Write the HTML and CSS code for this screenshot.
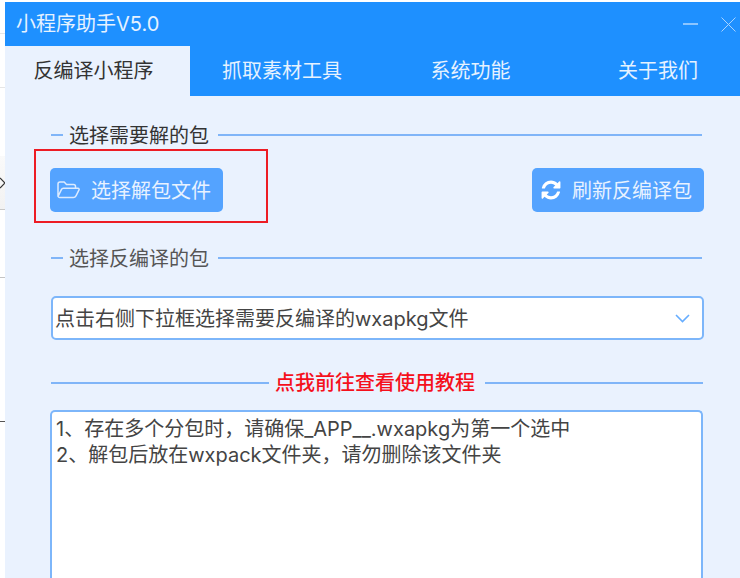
FILE: index.html
```html
<!DOCTYPE html>
<html lang="zh-CN">
<head>
<meta charset="utf-8">
<title>小程序助手V5.0</title>
<link rel="stylesheet" href="styles.css">
</head>
<body>
<div class="desktop">
  <div class="behind">
    <div class="b-row b-33"></div>
    <div class="b-row b-87"></div>
    <div class="b-row b-155"></div>
    <div class="b-row b-209"><svg class="b-chev" viewBox="0 0 5 12" width="5" height="12"><path d="M0 1l5 5-5 5" fill="none" stroke="#333" stroke-width="1.2"/></svg></div>
    <div class="b-row b-277"></div>
    <div class="b-row b-421"></div>
  </div>
  <div class="app">
    <header class="titlebar">
      <span class="app-title">小程序助手V5.0</span>
      <div class="win-controls">
        <svg width="15" height="2" viewBox="0 0 15 2"><path d="M0 1h15" stroke="#a9d3ff" stroke-width="1.6"/></svg>
        <svg width="15" height="15" viewBox="0 0 15 15"><path d="M.5.5l14 14M14.500.5l-14 14" fill="none" stroke="#a9d3ff" stroke-width="1"/></svg>
      </div>
    </header>
    <nav class="tabs">
      <div class="tab active">反编译小程序</div>
      <div class="tab t2">抓取素材工具</div>
      <div class="tab t3">系统功能</div>
      <div class="tab t4">关于我们</div>
    </nav>
    <main class="panel">
      <div class="legend first"><i class="dash"></i><span class="legend-text">选择需要解的包</span><i class="rule"></i></div>
      <div class="actions">
        <button class="btn btn-l" type="button">
          <svg class="ico-folder" width="23" height="18" viewBox="0 0 23 18"><path d="M1 15V3a2 2 0 0 1 2-2h4.200l2.300 2.500h7a2 2 0 0 1 2 2V7M1 15.500 4.500 8.300a2 2 0 0 1 1.800-1.100h14.700c.9 0 1.400.9 1 1.700l-3 6a3 3 0 0 1-2.700 1.600H3a2 2 0 0 1-2-1z" fill="none" stroke="#dcebff" stroke-width="1.500" stroke-linejoin="round"/></svg>
          <span class="btn-label">选择解包文件</span>
        </button>
        <button class="btn btn-r" type="button">
          <svg class="ico-refresh" width="22" height="22" viewBox="0 0 1792 1792"><path fill="#fff" d="M1639 1056q0 5-1 7-64 268-268 434.500t-478 166.500q-146 0-282.500-55t-243.500-157l-129 129q-19 19-45 19t-45-19-19-45v-448q0-26 19-45t45-19h448q26 0 45 19t19 45-19 45l-137 137q71 66 161 102t187 36q134 0 250-65t186-179q11-17 53-117 8-23 30-23h192q13 0 22.500 9.500t9.500 22.500zm25-800v448q0 26-19 45t-45 19h-448q-26 0-45-19t-19-45 19-45l138-138q-148-137-349-137-134 0-250 65t-186 179q-11 17-53 117-8 23-30 23h-199q-13 0-22.500-9.500t-9.500-22.500v-7q65-268 270-434.500t480-166.500q146 0 284 55.500t245 156.500l130-129q19-19 45-19t45 19 19 45z"/></svg>
          <span class="btn-label">刷新反编译包</span>
        </button>
      </div>
      <div class="legend second"><i class="dash"></i><span class="legend-text muted">选择反编译的包</span><i class="rule"></i></div>
      <div class="select">
        <span class="select-value">点击右侧下拉框选择需要反编译的wxapkg文件</span>
        <svg width="15" height="9" viewBox="0 0 15 9"><path d="M1 1l6.500 6.500L14 1" fill="none" stroke="#66adff" stroke-width="1.600"/></svg>
      </div>
      <div class="link-row"><i class="rule"></i><a class="link">点我前往查看使用教程</a><i class="rule"></i></div>
      <div class="notes">
        <p>1、存在多个分包时，请确保_APP__.wxapkg为第一个选中</p>
        <p>2、解包后放在wxpack文件夹，请勿删除该文件夹</p>
      </div>
    </main>
  </div>
  <div class="annotation"></div>
</div>
</body>
</html>
```
FILE: styles.css
```css
* { box-sizing: border-box; }
html, body { margin: 0; height: 578px; overflow: hidden; background: #fff; }
body { font-family: Inter, "Noto Sans CJK SC", sans-serif; font-size: 20px; color: #444; }

.desktop { position: relative; display: flex; width: 740px; height: 578px; overflow: hidden; }

.behind { width: 5px; flex: none; display: flex; flex-direction: column; }
.b-row { flex: none; border-bottom: 1px solid #e6e6e6; }
.b-33 { height: 34px; }
.b-87 { height: 54px; }
.b-155 { height: 68px; border-bottom: 0; }
.b-209 { height: 54px; border-bottom-color: #c8c8c8; background: linear-gradient(#fafafa, #f2f2f2); display: flex; align-items: center; }
.b-277 { height: 68px; border-bottom-color: #c4c4c4; }
.b-421 { height: 144px; border-bottom-color: #555; }

.app { width: 735px; height: 576px; margin-top: 2px; flex: none; display: flex; flex-direction: column; background: #eaf2fe; overflow: hidden; }

.titlebar { height: 44px; flex: none; background: #1e90ff; display: flex; align-items: center; justify-content: space-between; padding: 0 4px 0 11px; color: #e6f2ff; }
.app-title { font-size: 20px; line-height: 44px; }
.win-controls { display: flex; align-items: center; gap: 23px; }

.tabs { height: 50px; flex: none; display: flex; background: #1e90ff; color: #e6f2ff; line-height: 50px; }
.tab { flex: none; text-align: center; }
.tab.active { width: 185px; padding-right: 8px; background: #eaf2fe; color: #333; }
.t2 { width: 184px; }
.t3 { width: 193px; }
.t4 { width: 173px; padding-left: 9px; }

.panel { flex: 1; min-height: 0; padding: 0 38px 0 46px; display: flex; flex-direction: column; }
.panel > * { flex: none; }

.legend { display: flex; align-items: center; height: 28px; }
.legend.first { margin-top: 25px; }
.legend.second { margin-top: 32px; }
.dash { width: 12px; height: 2px; background: #80b5f8; flex: none; }
.rule { flex: 1; height: 2px; background: #80b5f8; }
.legend-text { margin: 0 9px 0 6px; color: #333; line-height: 28px; padding-top: 1px; }
.legend-text.muted { color: #555; }

.actions { display: flex; justify-content: space-between; margin-top: 19px; margin-left: -1px; margin-right: -2px; }
.btn { height: 44px; border: 0; border-radius: 5px; background: #54a3ff; color: #e8f2ff; font: inherit; display: flex; align-items: center; padding: 0; }
.btn-l { width: 173px; padding-left: 7px; }
.btn-r { width: 172px; padding-left: 8px; }
.btn-label { padding-bottom: 2px; }
.ico-folder { margin-right: 11px; }
.ico-refresh { margin-right: 10px; }

.select { margin-top: 24px; height: 44px; background: #fff; border: 2px solid #7db6fa; border-radius: 5px; display: flex; align-items: center; justify-content: space-between; padding: 0 12px 0 2px; margin-right: -2px; color: #444; }
.select-value { padding-bottom: 2px; }

.link-row { display: flex; align-items: center; height: 28px; margin-top: 29px; margin-right: -1px; }
.link { color: #f5101c; margin: 0 10px 0 6px; font-weight: 500; line-height: 28px; }

.notes { margin-top: 13px; margin-left: -1px; margin-right: -1px; height: 168px; background: #fff; border: 2px solid #7db6fa; border-bottom: 0; border-radius: 5px 5px 0 0; padding: 4px 4px; color: #444; }
.notes p { margin: 0; line-height: 26px; }

.annotation { position: absolute; left: 34px; top: 149px; width: 234px; height: 74px; border: 2px solid #ed1c24; pointer-events: none; }
```
